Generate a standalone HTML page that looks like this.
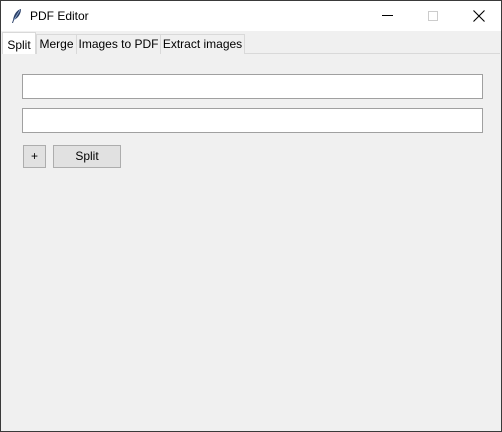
<!DOCTYPE html>
<html><head><style>
*{margin:0;padding:0;box-sizing:border-box}
body{width:502px;height:432px;background:#f0f0f0;font-family:"Liberation Sans",sans-serif;font-size:12px;color:#000;position:relative;overflow:hidden}
.frame{position:absolute;left:0;top:0;width:502px;height:432px;border:1px solid #3a3a3a}
.title{position:absolute;left:1px;top:1px;width:500px;height:30px;background:#fff}
.title span{position:absolute;left:29px;top:8px;font-size:12px}
.tab{position:absolute;top:34px;height:20px;border:1px solid #d9d9d9;border-bottom:none;background:#f0f0f0;font-size:12px;text-align:center;line-height:19px}
.panel{position:absolute;left:2px;top:53px;width:498px;height:377px;border-top:1px solid #d9d9d9}
.entry{position:absolute;left:22px;width:461px;height:25px;background:#fff;border:1px solid #a0a0a0}
.btn{position:absolute;top:145px;height:23px;background:#e1e1e1;border:1px solid #adadad;text-align:center;line-height:21px}
</style></head><body>
<div class="title"><span>PDF Editor</span>
<svg style="position:absolute;left:10px;top:7px" width="12" height="16" viewBox="0 0 12 16"><path d="M10 1 C6 2 3 6 2 12 L1 15 L2 15 L3 12 C7 10 10 6 10 1Z" fill="#2a3f66"/><path d="M9 2 L3 12" stroke="#8fa8d0" stroke-width="0.8"/></svg>
<div style="position:absolute;left:381px;top:14px;width:11px;height:1px;background:#000"></div>
<div style="position:absolute;left:427px;top:10px;width:10px;height:10px;border:1px solid #ccc"></div>
<svg style="position:absolute;left:472px;top:9px" width="12" height="12"><path d="M0.5 0.5L11.5 11.5M11.5 0.5L0.5 11.5" stroke="#000" stroke-width="1.1"/></svg>
</div>
<div class="panel"></div>
<div class="tab" style="left:36px;width:41px">Merge</div>
<div class="tab" style="left:76px;width:85px">Images to PDF</div>
<div class="tab" style="left:160px;width:85px">Extract images</div>
<div class="tab" style="left:2px;top:32px;height:22px;width:34px;background:#fff;line-height:24px">Split</div>
<div class="entry" style="top:74px"></div>
<div class="entry" style="top:108px"></div>
<div class="btn" style="left:23px;width:23px">+</div>
<div class="btn" style="left:53px;width:68px">Split</div>
<div class="frame"></div>
</body></html>
